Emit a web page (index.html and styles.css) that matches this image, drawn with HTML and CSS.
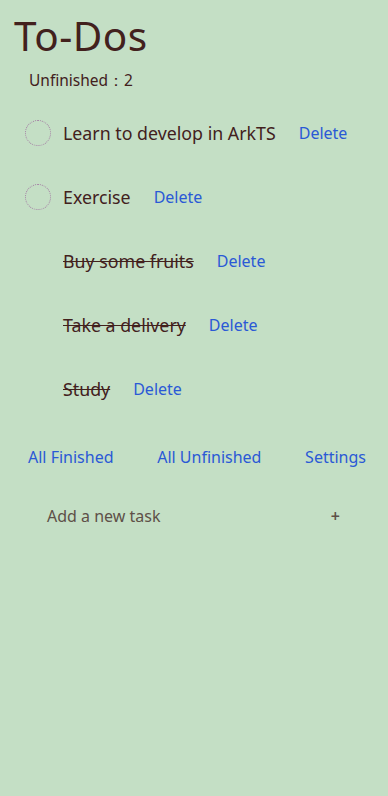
FILE: index.html
```html
<!DOCTYPE html>
<html>
<head>
<meta charset="utf-8">
<link rel="stylesheet" href="styles.css">
</head>
<body>
<div class="page">
  <h1 class="title">To-Dos</h1>
  <div class="count">Unfinished：2</div>
  <ul class="list">
    <li class="item">
      <span class="check"></span>
      <span class="task">Learn to develop in ArkTS</span>
      <span class="del">Delete</span>
    </li>
    <li class="item">
      <span class="check"></span>
      <span class="task">Exercise</span>
      <span class="del">Delete</span>
    </li>
    <li class="item done">
      <span class="check"></span>
      <span class="task">Buy some fruits</span>
      <span class="del">Delete</span>
    </li>
    <li class="item done">
      <span class="check"></span>
      <span class="task">Take a delivery</span>
      <span class="del">Delete</span>
    </li>
    <li class="item done">
      <span class="check"></span>
      <span class="task">Study</span>
      <span class="del">Delete</span>
    </li>
  </ul>
  <div class="actions">
    <span class="act">All Finished</span>
    <span class="act">All Unfinished</span>
    <span class="act">Settings</span>
  </div>
  <div class="add">
    <span class="add-text">Add a new task</span>
    <span class="plus">+</span>
  </div>
</div>
</body>
</html>
```
FILE: styles.css
```css
html, body {
  margin: 0;
  padding: 0;
  background: #c4dfc5;
}
body {
  font-family: "Noto Sans", "Open Sans", sans-serif;
  color: #42211d;
  width: 388px;
  height: 796px;
}
.page {
  padding: 12px 0 0 0;
}
.title {
  margin: 0 0 0 14px;
  font-size: 40.5px;
  font-weight: 400;
  line-height: 48px;
  letter-spacing: 0.5px;
}
.count {
  margin: 8px 0 0 29px;
  font-size: 15.5px;
  line-height: 24px;
}
.list {
  list-style: none;
  margin: 9px 0 0 0;
  padding: 0;
}
.item {
  display: flex;
  align-items: center;
  height: 64px;
  padding-left: 25px;
}
.check {
  width: 26px;
  height: 26px;
  box-sizing: border-box;
  border: 1px dotted #a47ea4;
  border-radius: 50%;
  flex: none;
  margin-right: 12px;
}
.done .check {
  border-color: transparent;
}
.task {
  font-size: 17.8px;
  line-height: 24px;
}
.done .task {
  text-decoration: line-through;
}
.del {
  margin-left: 23px;
  font-size: 16px;
  color: #2a59d6;
}
.actions {
  display: flex;
  justify-content: space-between;
  align-items: center;
  height: 40px;
  margin-top: 16px;
  padding: 0 22px 0 28px;
  font-size: 16px;
  color: #2a59d6;
}
.add {
  display: flex;
  justify-content: space-between;
  align-items: center;
  height: 50px;
  margin-top: 14px;
  padding: 0 48px 0 47px;
  font-size: 16px;
  color: #5e5048;
}
.plus {
  font-size: 16px;
  font-weight: 600;
}
```
